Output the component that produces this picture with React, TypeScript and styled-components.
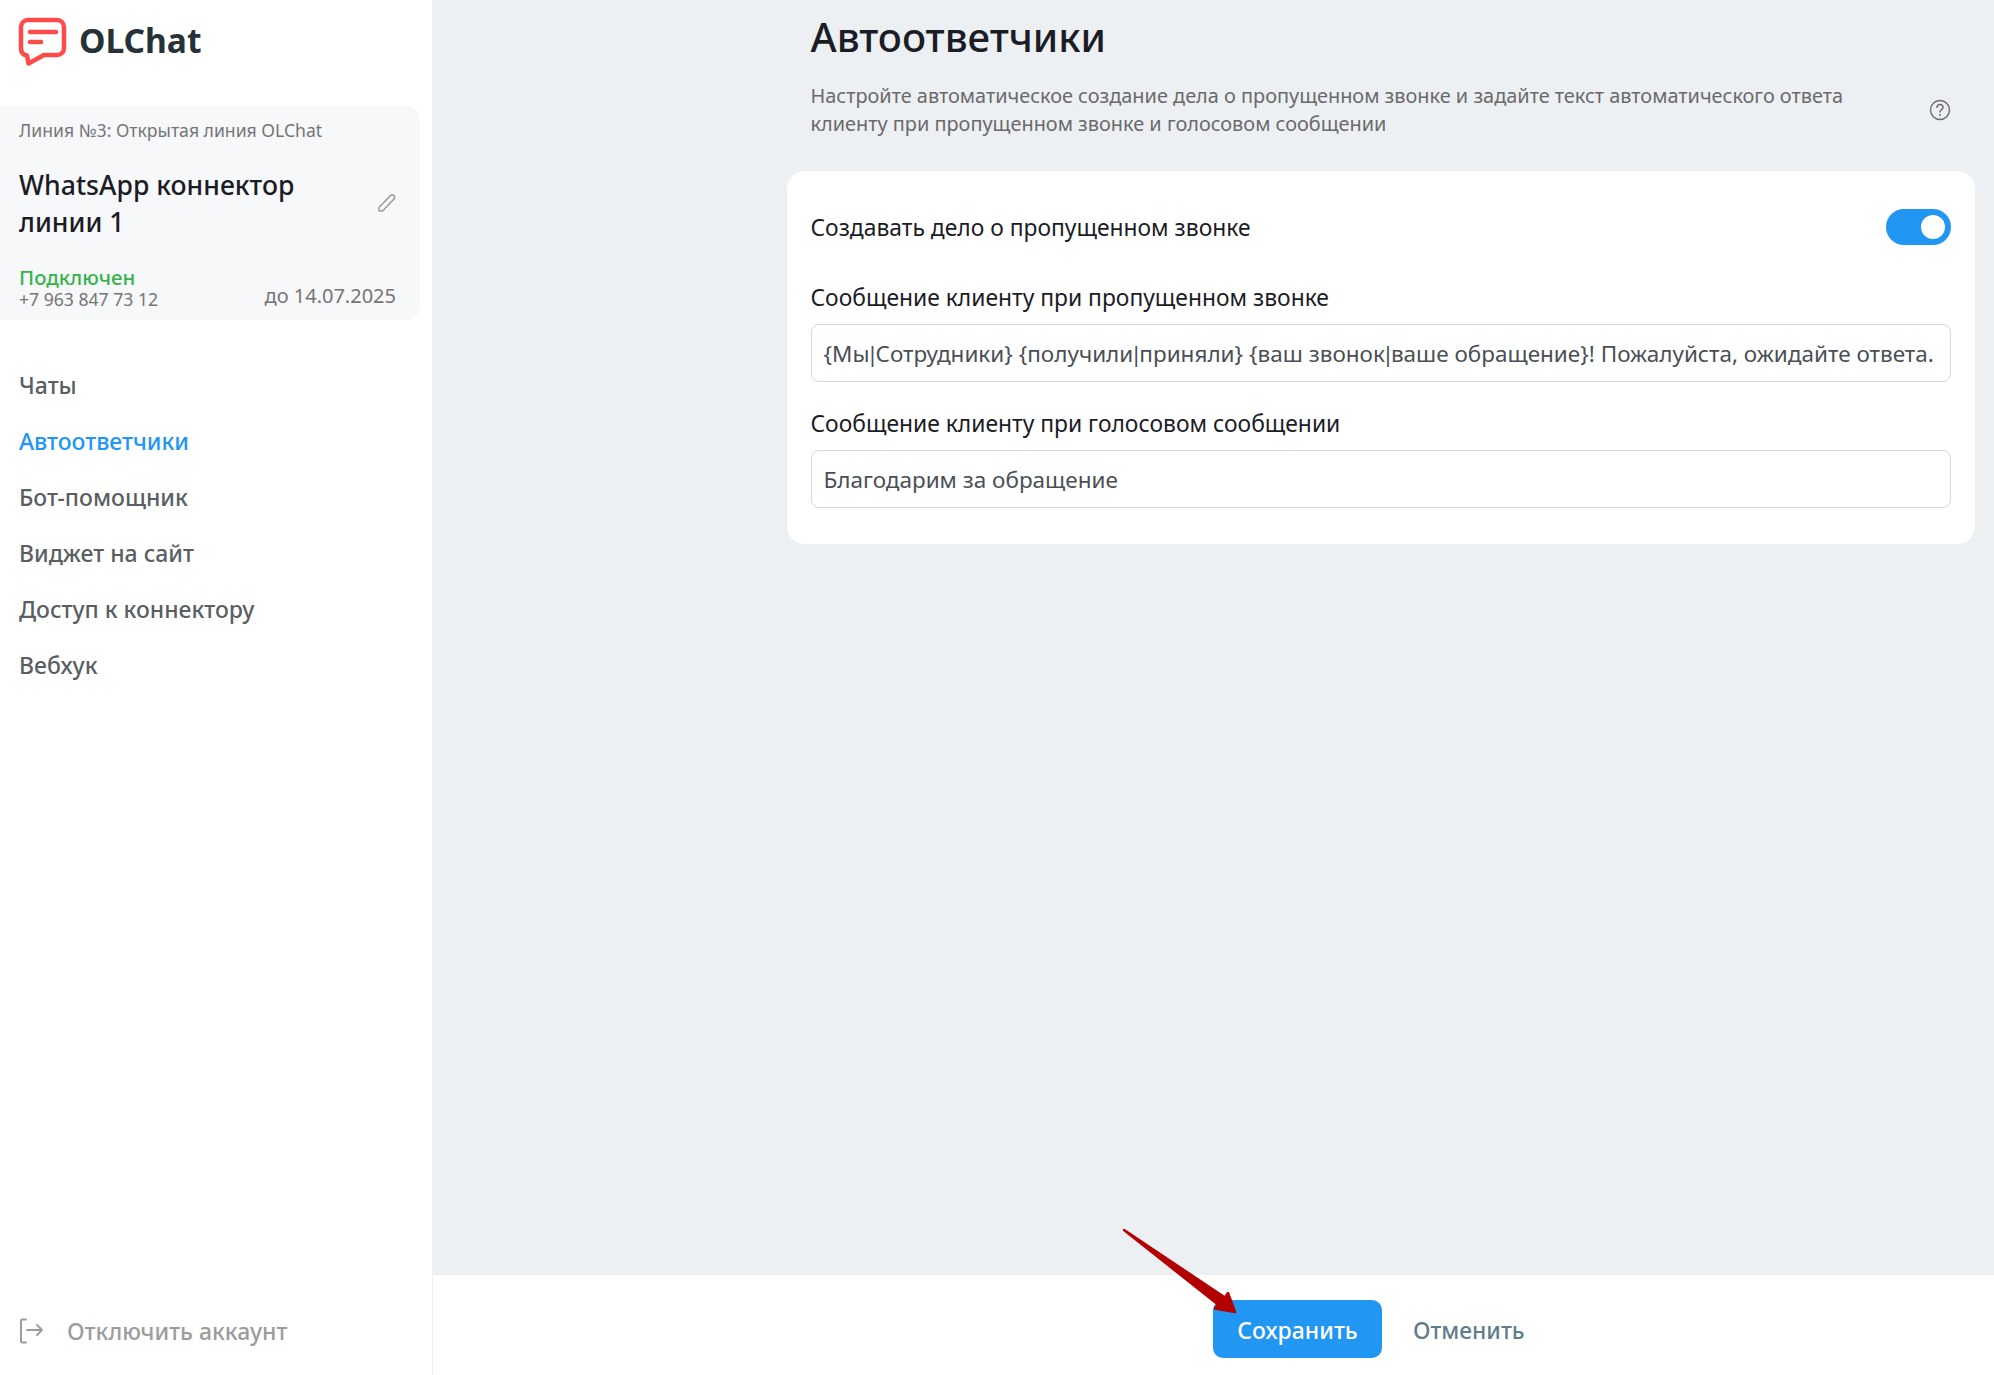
import React from "react";
import styled, { createGlobalStyle } from "styled-components";

const GlobalStyle = createGlobalStyle`
  html, body {
    margin: 0;
    padding: 0;
    height: 100%;
    background: #fff;
    font-family: "Noto Sans", "Open Sans", sans-serif;
  }
  * {
    box-sizing: border-box;
  }
`;

const navItems = ["Чаты", "Автоответчики", "Бот-помощник", "Виджет на сайт", "Доступ к коннектору", "Вебхук"];

const App = () => {
  return (
    <Page>
      <GlobalStyle />
      <Sidebar>
        <Logo>
          <svg width="50" height="50" viewBox="0 0 50 50" fill="none">
            <path
              d="M10 3h29c4 0 7 3 7 7v21c0 4-3 7-7 7H26L10.500 46.500 9 38.500C5 38 3 35 3 31V10c0-4 3-7 7-7z"
              stroke="#ff4a4a"
              strokeWidth="4.500"
              strokeLinejoin="round"
            />
            <path d="M12 15h26" stroke="#ff4a4a" strokeWidth="4.500" strokeLinecap="round" />
            <path d="M12 25h11" stroke="#ff4a4a" strokeWidth="4.500" strokeLinecap="round" />
          </svg>
          <LogoText>OLChat</LogoText>
        </Logo>
        <LineCard>
          <LineName>Линия №3: Открытая линия OLChat</LineName>
          <TitleRow>
            <ConnectorName>WhatsApp коннектор линии 1</ConnectorName>
            <EditIcon width="20" height="20" viewBox="0 0 20 20" fill="none">
              <path
                d="M2 14.500 13.500 2.500c1-1 2.500-1 3.500 0s1 2.500 0 3.500L5.500 18H2v-3.500z"
                stroke="#9a9a9a"
                strokeWidth="1.500"
                strokeLinejoin="round"
              />
            </EditIcon>
          </TitleRow>
          <StatusRow>
            <div>
              <Status>Подключен</Status>
              <Phone>+7 963 847 73 12</Phone>
            </div>
            <Expiry>до 14.07.2025</Expiry>
          </StatusRow>
        </LineCard>
        <Nav>
          {navItems.map((item) => (
            <NavItem key={item} $active={item === "Автоответчики"}>
              {item}
            </NavItem>
          ))}
        </Nav>
        <Logout>
          <svg width="25" height="26" viewBox="0 0 25 26" fill="none">
            <path d="M7 1.500H3.500C2.500 1.500 2 2 2 3v20c0 1 .5 1.500 1.500 1.500H7" stroke="#9c9c9c" strokeWidth="2" strokeLinecap="round" />
            <path d="M8 12h15M18 7l5 5-5 5" stroke="#9c9c9c" strokeWidth="1.800" strokeLinecap="round" strokeLinejoin="round" />
          </svg>
          <span>Отключить аккаунт</span>
        </Logout>
      </Sidebar>
      <Main>
        <Content>
          <Title>Автоответчики</Title>
          <DescriptionRow>
            <Description>
              Настройте автоматическое создание дела о пропущенном звонке и задайте текст автоматического ответа клиенту при
              пропущенном звонке и голосовом сообщении
            </Description>
            <svg width="22" height="22" viewBox="0 0 22 22" fill="none">
              <circle cx="11" cy="11" r="9.500" stroke="#6f6f6f" strokeWidth="1.500" />
              <path d="M8 8.500c0-1.800 1.300-3 3-3s3 1.200 3 2.800c0 2.200-3 2.400-3 4.700" stroke="#6f6f6f" strokeWidth="1.500" strokeLinecap="round" />
              <circle cx="11" cy="16" r="1" fill="#6f6f6f" />
            </svg>
          </DescriptionRow>
          <Card>
            <SwitchRow>
              <FieldLabel>Создавать дело о пропущенном звонке</FieldLabel>
              <Switch>
                <Knob />
              </Switch>
            </SwitchRow>
            <Field>
              <FieldLabel>Сообщение клиенту при пропущенном звонке</FieldLabel>
              <InputBox>
                {"{Мы"}
                <Pipe>|</Pipe>
                {"Сотрудники} {получили"}
                <Pipe>|</Pipe>
                {"приняли} {ваш звонок"}
                <Pipe>|</Pipe>
                {"ваше обращение}! Пожалуйста, ожидайте ответа."}
              </InputBox>
            </Field>
            <Field>
              <FieldLabel>Сообщение клиенту при голосовом сообщении</FieldLabel>
              <InputBox>Благодарим за обращение</InputBox>
            </Field>
          </Card>
        </Content>
        <Footer>
          <SaveButton>Сохранить</SaveButton>
          <CancelButton>Отменить</CancelButton>
        </Footer>
      </Main>
      <Arrow width="116" height="86" viewBox="0 0 116 86" fill="none">
        <path d="M1 1 102 68.500 105 64 112 83 92 79.500 95 75.500Z" fill="#b30000" stroke="#b30000" strokeWidth="2.500" strokeLinejoin="round" />
      </Arrow>
    </Page>
  );
};

export default App;

const Page = styled.div`
  position: relative;
  display: flex;
  width: 100%;
  height: 1375px;
  overflow: hidden;
`;

const Sidebar = styled.aside`
  width: 433px;
  flex: none;
  display: flex;
  flex-direction: column;
  background: #fff;
  border-right: 1px solid #edf0f4;
`;

const Logo = styled.div`
  display: flex;
  align-items: center;
  gap: 11px;
  height: 106px;
  padding: 0 0 22px 18px;
`;

const LogoText = styled.div`
  margin-top: -5px;
  font-size: 33.500px;
  font-weight: 700;
  color: #263238;
`;

const LineCard = styled.div`
  width: 420px;
  height: 214px;
  padding: 12px 24px 0 19px;
  background: #f7f8fa;
  border-radius: 0 14px 14px 0;
`;

const LineName = styled.div`
  font-size: 17.600px;
  line-height: 24px;
  color: #757575;
`;

const TitleRow = styled.div`
  display: flex;
  align-items: center;
  justify-content: space-between;
  margin-top: 25px;
`;

const ConnectorName = styled.div`
  width: 300px;
  font-size: 26.600px;
  font-weight: 500;
  line-height: 37px;
  color: #1b1d26;
`;

const EditIcon = styled.svg`
  margin: -2px -1px 0 0;
`;

const StatusRow = styled.div`
  display: flex;
  align-items: flex-end;
  justify-content: space-between;
  margin-top: 26px;
`;

const Status = styled.div`
  font-size: 20.400px;
  font-weight: 500;
  line-height: 21px;
  color: #37b34a;
`;

const Phone = styled.div`
  font-size: 17.600px;
  line-height: 22px;
  color: #757575;
`;

const Expiry = styled.div`
  font-size: 20px;
  line-height: 28px;
  color: #757575;
`;

const Nav = styled.nav`
  display: flex;
  flex-direction: column;
  margin-top: 37px;
  flex: 1;
`;

const NavItem = styled.div<{ $active?: boolean }>`
  height: 56px;
  padding-left: 19px;
  font-size: 23px;
  font-weight: 500;
  line-height: 56px;
  color: ${({ $active }) => ($active ? "#2196f3" : "#5a5f63")};
`;

const Logout = styled.div`
  display: flex;
  align-items: center;
  gap: 23px;
  height: 98px;
  padding: 10px 0 0 19px;
  font-size: 23px;
  font-weight: 500;
  color: #9c9c9c;
`;

const Main = styled.main`
  flex: 1;
  display: flex;
  flex-direction: column;
  background: #edf0f3;
`;

const Content = styled.div`
  flex: 1;
  padding: 0 19px 0 354px;
`;

const Title = styled.h1`
  margin: 0;
  padding: 9px 0 0 23.500px;
  font-size: 40px;
  font-weight: 500;
  line-height: 56px;
  color: #1b1d26;
`;

const DescriptionRow = styled.div`
  display: flex;
  align-items: center;
  justify-content: space-between;
  margin-top: 16.500px;
  padding: 0 24px 0 23.500px;
  svg {
    flex: none;
  }
`;

const Description = styled.p`
  margin: 0;
  width: 1060px;
  font-size: 19.900px;
  line-height: 28px;
  color: #6a6a6a;
`;

const Card = styled.section`
  margin-top: 33.500px;
  height: 373px;
  padding: 39px 24px 0 23.500px;
  background: #fff;
  border-radius: 18px;
`;

const SwitchRow = styled.div`
  display: flex;
  align-items: center;
  justify-content: space-between;
  height: 36px;
  margin-bottom: 37px;
`;

const Switch = styled.div`
  display: flex;
  align-items: center;
  justify-content: flex-end;
  width: 65px;
  height: 36px;
  margin-top: -3px;
  padding-right: 6px;
  background: #2196f3;
  border-radius: 18px;
`;

const Knob = styled.div`
  width: 24px;
  height: 24px;
  background: #fff;
  border-radius: 50%;
`;

const Field = styled.div`
  margin-bottom: 27px;
`;

const FieldLabel = styled.div`
  font-size: 22.850px;
  line-height: 30px;
  color: #1b1d26;
`;

const InputBox = styled.div`
  display: flex;
  align-items: center;
  width: 100%;
  height: 58px;
  margin-top: 11px;
  padding: 0 12px;
  border: 1px solid #d5d9dd;
  border-radius: 8px;
  background: #fff;
  font-size: 22.500px;
  white-space: pre;
  color: #4a4f55;
`;

const Pipe = styled.span`
  margin: 0 -3.200px;
`;

const Footer = styled.footer`
  display: flex;
  align-items: flex-start;
  gap: 31px;
  height: 100px;
  padding: 25px 0 0 780px;
  background: #fff;
`;

const SaveButton = styled.button`
  width: 169px;
  height: 58px;
  padding: 2px 0 0;
  border: none;
  border-radius: 10px;
  background: #2196f3;
  font-family: inherit;
  font-size: 23px;
  font-weight: 500;
  color: #fff;
`;

const CancelButton = styled.button`
  height: 58px;
  padding: 2px 0 0;
  border: none;
  background: none;
  font-family: inherit;
  font-size: 22.800px;
  font-weight: 500;
  color: #607d8b;
`;

const Arrow = styled.svg`
  position: absolute;
  left: 1123px;
  top: 1229px;
`;
